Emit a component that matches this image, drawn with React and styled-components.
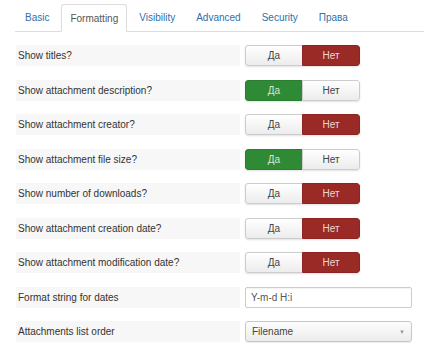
import React from 'react'
import styled, { createGlobalStyle } from 'styled-components'

const Global = createGlobalStyle`
    body {
        margin: 0;
        background: #fff;
        font-family: 'Liberation Sans', Arial, sans-serif;
    }
`;

const tabs = ['Basic', 'Formatting', 'Visibility', 'Advanced', 'Security', 'Права'];

const rows = [
    { label: 'Show titles?', value: 'no' },
    { label: 'Show attachment description?', value: 'yes' },
    { label: 'Show attachment creator?', value: 'no' },
    { label: 'Show attachment file size?', value: 'yes' },
    { label: 'Show number of downloads?', value: 'no' },
    { label: 'Show attachment creation date?', value: 'no' },
    { label: 'Show attachment modification date?', value: 'no' },
];

const App = () => {
    return (
        <Page>
            <Global />
            <Tabs>
                {tabs.map((t) => (
                    <Tab key={t} active={t === 'Formatting'}>{t}</Tab>
                ))}
            </Tabs>

            <Form>
                {rows.map((r) => (
                    <Row key={r.label}>
                        <Label>{r.label}</Label>
                        <Toggle>
                            <ToggleBtn on={r.value === 'yes'} kind="yes">Да</ToggleBtn>
                            <ToggleBtn on={r.value === 'no'} kind="no">Нет</ToggleBtn>
                        </Toggle>
                    </Row>
                ))}
                <Row>
                    <Label>Format string for dates</Label>
                    <Input defaultValue="Y-m-d H:i" />
                </Row>
                <Row>
                    <Label>Attachments list order</Label>
                    <Select>
                        <span>Filename</span>
                        <Caret>▼</Caret>
                    </Select>
                </Row>
            </Form>
        </Page>
    )
}

const Page = styled.div`
    width: 424px;
    height: 350px;
    padding: 4px 0 0 15px;
    box-sizing: border-box;
    overflow: hidden;
`;

const Tabs = styled.div`
    display: flex;
    gap: 3px;
    border-bottom: 1px solid #ddd;
    height: 27px;
    padding-left: 1px;
`;

const Tab = styled.div`
    box-sizing: border-box;
    height: ${(p) => (p.active ? '28px' : '27px')};
    padding: 0 8px;
    display: flex;
    align-items: center;
    font-size: 10px;
    color: ${(p) => (p.active ? '#555' : '#2f6fab')};
    background: #fff;
    border: 1px solid ${(p) => (p.active ? '#ddd' : 'transparent')};
    border-bottom-color: ${(p) => (p.active ? '#fff' : 'transparent')};
    border-radius: 3px 3px 0 0;
`;

const Form = styled.div`
    display: flex;
    flex-direction: column;
    gap: 13.5px;
    margin-top: 13px;
`;

const Row = styled.div`
    display: grid;
    grid-template-columns: 224px 167px;
    column-gap: 5px;
    height: 21px;
    align-items: center;
    padding-left: 1px;
`;

const Label = styled.div`
    height: 21px;
    display: flex;
    align-items: center;
    padding-left: 2px;
    background: #f7f7f7;
    font-size: 10px;
    color: #333;
`;

const Toggle = styled.div`
    display: flex;
    width: 115px;
    height: 21px;
    border-radius: 3px;
    overflow: hidden;
    box-shadow: 0 1px 2px rgba(0, 0, 0, 0.12);
`;

const ToggleBtn = styled.div`
    flex: 1;
    display: flex;
    align-items: center;
    justify-content: center;
    font-size: 10px;
    box-sizing: border-box;
    color: ${(p) => (p.on ? 'rgba(255, 255, 255, 0.82)' : '#444')};
    background: ${(p) =>
        p.on
            ? p.kind === 'yes' ? '#2f8a36' : '#9a2a25'
            : 'linear-gradient(#fff, #ececec)'};
    border: 1px solid ${(p) =>
        p.on ? (p.kind === 'yes' ? '#2a7d31' : '#8c2521') : '#ccc'};
    ${(p) => p.kind === 'yes'
        ? 'border-radius: 3px 0 0 3px; border-right: none;'
        : 'border-radius: 0 3px 3px 0;'}
`;

const Input = styled.input`
    box-sizing: border-box;
    width: 167px;
    height: 21px;
    padding: 0 5px;
    border: 1px solid #ccc;
    border-radius: 2px;
    font-family: 'Liberation Sans', Arial, sans-serif;
    font-size: 10px;
    color: #555;
    box-shadow: inset 0 1px 1px rgba(0, 0, 0, 0.05);
    outline: none;
`;

const Select = styled.div`
    box-sizing: border-box;
    width: 167px;
    height: 21px;
    padding: 0 6px;
    display: flex;
    align-items: center;
    justify-content: space-between;
    border: 1px solid #c8c8c8;
    border-radius: 3px;
    background: linear-gradient(#fdfdfd, #ececec);
    box-shadow: 0 1px 1px rgba(0, 0, 0, 0.08);
    font-size: 10px;
    color: #444;
`;

const Caret = styled.span`
    font-size: 6px;
    color: #999;
`;

export default App;
